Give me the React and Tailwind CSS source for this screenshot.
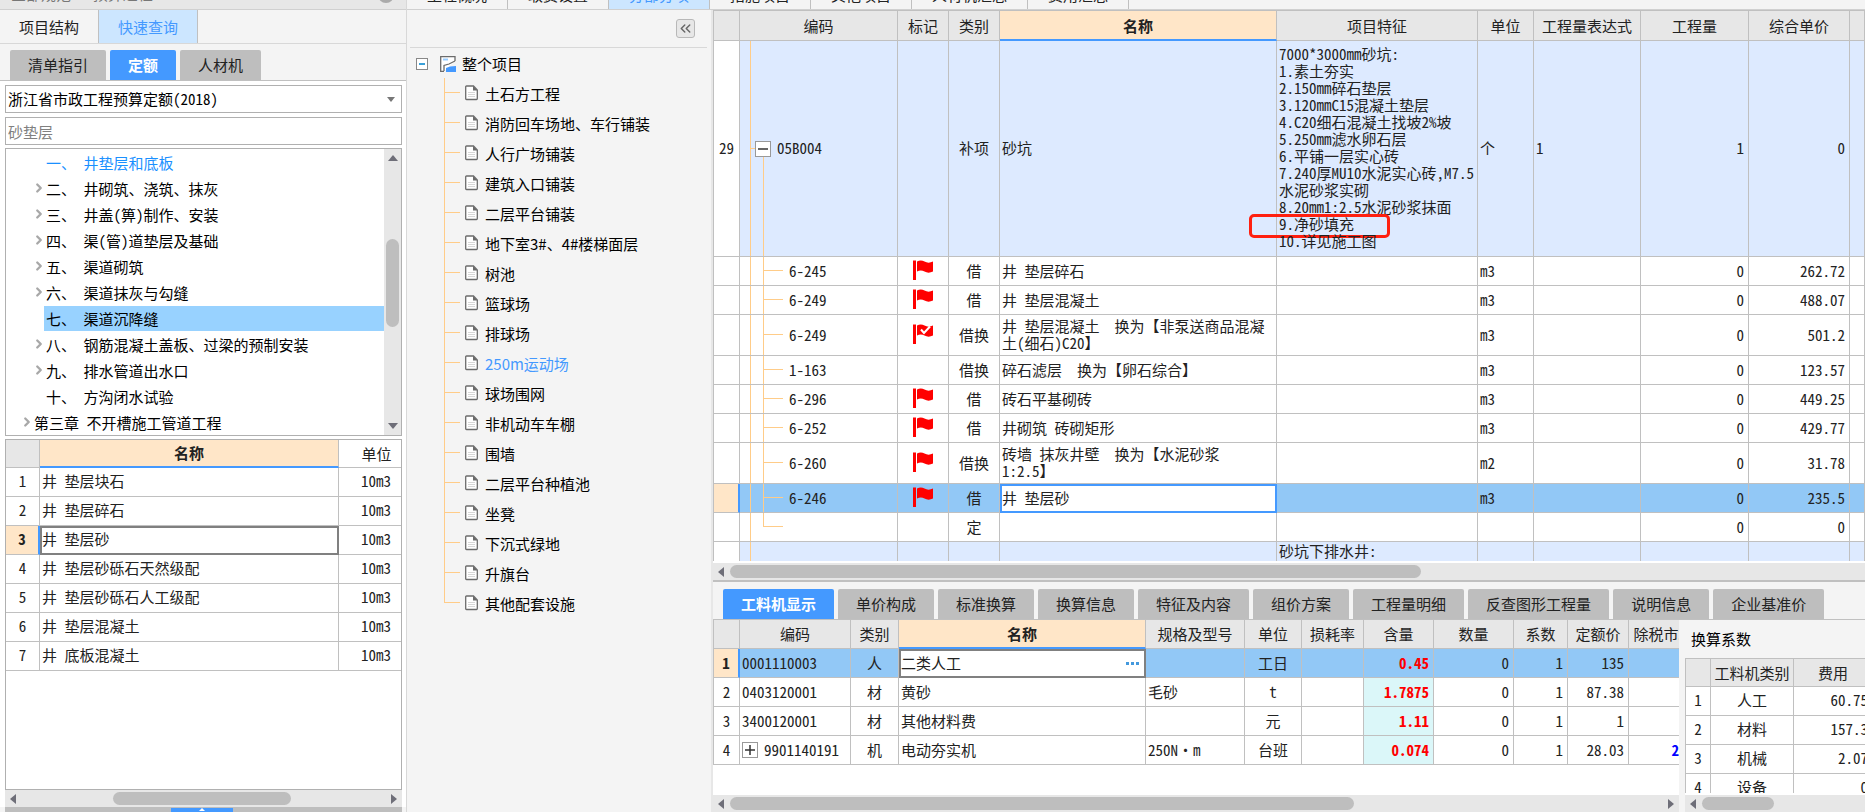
import { useState } from 'react';
import { ChevronRight, ChevronsLeft } from 'lucide-react';
import clsx from 'clsx';

const quotaTree = [
  { text: '一、 井垫层和底板', leaf: true, current: true },
  { text: '二、 井砌筑、浇筑、抹灰' },
  { text: '三、 井盖(箅)制作、安装' },
  { text: '四、 渠(管)道垫层及基础' },
  { text: '五、 渠道砌筑' },
  { text: '六、 渠道抹灰与勾缝' },
  { text: '七、 渠道沉降缝', leaf: true, selected: true },
  { text: '八、 钢筋混凝土盖板、过梁的预制安装' },
  { text: '九、 排水管道出水口' },
  { text: '十、 方沟闭水试验', leaf: true },
  { text: '第三章 不开槽施工管道工程', top: true },
];

const quotaItems = [
  '井 垫层块石',
  '井 垫层碎石',
  '井 垫层砂',
  '井 垫层砂砾石天然级配',
  '井 垫层砂砾石人工级配',
  '井 垫层混凝土',
  '井 底板混凝土',
];

const projectItems = [
  '土石方工程',
  '消防回车场地、车行铺装',
  '人行广场铺装',
  '建筑入口铺装',
  '二层平台铺装',
  '地下室3#、4#楼梯面层',
  '树池',
  '篮球场',
  '排球场',
  '250m运动场',
  '球场围网',
  '非机动车车棚',
  '围墙',
  '二层平台种植池',
  '坐凳',
  '下沉式绿地',
  '升旗台',
  '其他配套设施',
];

const mainTabs = ['工程概况', '取费设置', '分部分项', '措施项目', '其他项目', '人材机汇总', '费用汇总'];

const detailTabs = [
  '工料机显示',
  '单价构成',
  '标准换算',
  '换算信息',
  '特征及内容',
  '组价方案',
  '工程量明细',
  '反查图形工程量',
  '说明信息',
  '企业基准价',
];

const features = [
  '7000*3000mm砂坑:',
  '1.素土夯实',
  '2.150mm碎石垫层',
  '3.120mmC15混凝土垫层',
  '4.C20细石混凝土找坡2%坡',
  '5.250mm滤水卵石层',
  '6.平铺一层实心砖',
  '7.240厚MU10水泥实心砖,M7.5',
  '水泥砂浆实砌',
  '8.20mm1:2.5水泥砂浆抹面',
  '9.净砂填充',
  '10.详见施工图',
];

const billRows = [
  { code: '6-245', flag: 'plain', type: '借', name: '井 垫层碎石', unit: 'm3', price: '262.72' },
  { code: '6-249', flag: 'plain', type: '借', name: '井 垫层混凝土', unit: 'm3', price: '488.07' },
  { code: '6-249', flag: 'check', type: '借换', name: '井 垫层混凝土  换为【非泵送商品混凝\n土(细石)C20】', unit: 'm3', price: '501.2', tall: true },
  { code: '1-163', type: '借换', name: '碎石滤层  换为【卵石综合】', unit: 'm3', price: '123.57' },
  { code: '6-296', flag: 'plain', type: '借', name: '砖石平基砌砖', unit: 'm3', price: '449.25' },
  { code: '6-252', flag: 'plain', type: '借', name: '井砌筑 砖砌矩形', unit: 'm3', price: '429.77' },
  { code: '6-260', flag: 'plain', type: '借换', name: '砖墙 抹灰井壁  换为【水泥砂浆\n1:2.5】', unit: 'm2', price: '31.78', tall: true },
  { code: '6-246', flag: 'plain', type: '借', name: '井 垫层砂', unit: 'm3', price: '235.5', selected: true },
  { code: '', type: '定', name: '', unit: '', price: '0', last: true },
];

const resources = [
  { code: '0001110003', type: '人', name: '二类人工', spec: '', unit: '工日', amount: '0.45', price: '135', selected: true },
  { code: '0403120001', type: '材', name: '黄砂', spec: '毛砂', unit: 't', amount: '1.7875', price: '87.38' },
  { code: '3400120001', type: '材', name: '其他材料费', spec: '', unit: '元', amount: '1.11', price: '1' },
  { code: '9901140191', type: '机', name: '电动夯实机', spec: '250N·m', unit: '台班', amount: '0.074', price: '28.03', tax: '28.03', expand: true },
];

const factors = [
  ['人工', '60.75'],
  ['材料', '157.3'],
  ['机械', '2.07'],
  ['设备', '0'],
];

// Shared grid styles
const songFont = "font-['Noto_Sans_Mono_CJK_SC','Noto_Sans_CJK_SC',monospace]";
const cell = 'border-r border-b border-[#c0c0c0] whitespace-pre overflow-hidden p-0';
const billCell = clsx(cell, 'pb-[2px]');
const head = 'border-r border-b border-[#c0c0c0] bg-[#e7e7e7] font-normal whitespace-nowrap overflow-hidden p-0 text-center';
const headActive = 'border-r border-[#c0c0c0] border-b-2 border-b-[#4499ff] bg-[#ffe6c8] font-bold p-0 text-center';

const Triangle = ({ dir }) => {
  const points = {
    left: '8,0 8,10 2,5',
    right: '2,0 2,10 8,5',
    up: '0,8 10,8 5,2',
    down: '0,2 10,2 5,8',
  };
  return (
    <svg viewBox="0 0 10 10" className="size-[10px] shrink-0 fill-[#6e6e78]" aria-hidden="true">
      <polygon points={points[dir]} />
    </svg>
  );
};

const HScroll = ({ thumb, right = true }) => (
  <div className="flex h-[17px] shrink-0 items-center gap-1 bg-[#e7e7e7] px-[3px]">
    <Triangle dir="left" />
    <div className="flex-1">
      <div className={clsx('h-[13px] rounded-full bg-[#bebebe]', thumb)} />
    </div>
    {right && <Triangle dir="right" />}
  </div>
);

const Flag = ({ checked }) => (
  <svg viewBox="0 0 20 20" className="mx-auto size-5" aria-hidden="true">
    <path d="M0 0.500h3V20H0z" fill="#ff0000" />
    <path d="M4 1.500C6.500 0 9 0 11.500 1.500S17 3 20 1.500V11.500C17 13 14 13 11.500 11.500S6.500 10 4 11.500z" fill="#ff0000" />
    {checked && <path d="M8 5.500l3 3.500 6-6.500" fill="none" stroke="#fff" strokeWidth="2" />}
  </svg>
);

const DocIcon = () => (
  <svg viewBox="0 0 13 16" className="h-4 w-[13px] shrink-0" aria-hidden="true">
    <path d="M8.500 1H1.500a.8.8 0 0 0-.8.8V13.700a.8.8 0 0 0 .8.8H11.500a.8.8 0 0 0 .8-.8V5z" fill="#fff" stroke="#6b6b6b" strokeWidth="1.300" />
    <path d="M8 1v4.500h4.500z" fill="#6b6b6b" />
    <path d="M3 7.500h7M3 9.500h7M3 11.500h7" stroke="#d8d8d8" />
  </svg>
);

const ProjectIcon = () => (
  <svg viewBox="0 0 16 16" className="size-4 shrink-0" aria-hidden="true">
    <path d="M15 5V.700H.700V15.300H4" fill="#fff" stroke="#6b6b6b" strokeWidth="1.300" />
    <path d="M3 3.500h5" stroke="#99ccff" strokeWidth="2" />
    <path d="M4 15V9.500L9 8l6-3" fill="none" stroke="#6b6b6b" strokeWidth="1.300" />
    <path d="M6 16v-4l4-1.500 6-.5v6z" fill="#4499ff" />
  </svg>
);

const ExpandBox = ({ open }) => (
  <button className="flex size-4 shrink-0 items-center justify-center border border-[#999] bg-white" aria-label={open ? '收起' : '展开'}>
    <svg viewBox="0 0 10 10" className="size-[10px]">
      <path d={open ? 'M0 5h10' : 'M0 5h10M5 0v10'} stroke="#333" strokeWidth="1.500" />
    </svg>
  </button>
);

const GrayTabs = ({ items, active, onSelect }) => (
  <div className="flex gap-1">
    {items.map((t) => (
      <button
        key={t}
        onClick={() => onSelect(t)}
        className={clsx(
          'h-[30px] shrink-0 rounded-t-[2px] px-[18px] whitespace-nowrap',
          t === active ? 'bg-[#4499ff] font-bold text-white' : 'bg-[#bebebe] text-[#222]'
        )}
      >
        {t}
      </button>
    ))}
  </div>
);

const QuotaPanel = () => {
  const [tab, setTab] = useState('定额');

  return (
    <aside className="flex w-[407px] shrink-0 flex-col border-r border-[#d8d8d8] bg-[#f4f4f4]">
      <div className="flex h-[10px] shrink-0 items-end justify-between overflow-hidden border-b border-[#d0d0d0] bg-[#e7e7e7] pr-3 pl-[11px]">
        <span className="h-7 leading-[26px] text-[#777]">全部规范 一 预算过程</span>
        <span className="mb-[6px] size-4 shrink-0 rounded-full bg-[#aaa]" />
      </div>

      <div className="flex h-[34px] shrink-0 border-b border-[#d8d8d8]">
        <button className="border-r border-[#c0c0c0] px-[19px]">项目结构</button>
        <button className="border-r border-[#c0c0c0] bg-[#cce6ff] px-[19px] text-[#4499ff]">快速查询</button>
      </div>

      <div className="shrink-0 border-b border-[#c0c0c0] pt-[6px] pl-[10px]">
        <GrayTabs items={['清单指引', '定额', '人材机']} active={tab} onSelect={setTab} />
      </div>

      <div className={clsx('flex min-h-0 flex-1 flex-col bg-white pt-1 pr-1 pl-[5px]', songFont)}>
        <div className="flex h-7 shrink-0 items-center border border-[#b0b0b0] pr-[6px]">
          <select aria-label="定额库" className="h-full flex-1 appearance-none bg-white pl-[2px] text-black">
            <option>浙江省市政工程预算定额(2018)</option>
          </select>
          <svg viewBox="0 0 8 8" className="size-2 fill-[#777]" aria-hidden="true">
            <polygon points="0,2 8,2 4,7" />
          </svg>
        </div>
        <input
          type="text"
          aria-label="查询内容"
          placeholder="砂垫层"
          className="mt-1 h-7 shrink-0 border border-[#b0b0b0] pl-[2px] placeholder:text-[#808080]"
        />

        {/* Chapter tree */}
        <div className="mt-[3px] flex h-[288px] shrink-0 border border-[#b0b0b0]">
          <ul className="min-w-0 flex-1 overflow-hidden text-black">
            {quotaTree.map((n) => (
              <li key={n.text} className={clsx('flex h-[26px] items-center whitespace-pre', n.top ? 'pl-[14px]' : 'pl-[26px]')}>
                <span className="w-[12px] shrink-0">
                  {!n.leaf && <ChevronRight size={14} strokeWidth={4} className="text-[#a8a8a8]" />}
                </span>
                <span
                  className={clsx(
                    'flex-1 pl-[2px] leading-[25px]',
                    n.current && 'text-[#1a90ff]',
                    n.selected && 'bg-[#98d2ff]'
                  )}
                >
                  {n.text}
                </span>
              </li>
            ))}
          </ul>
          <div className="flex w-[17px] flex-col items-center bg-[#e7e7e7] py-1">
            <Triangle dir="up" />
            <div className="mt-[76px] h-[88px] w-[13px] rounded-full bg-[#bebebe]" />
            <div className="mt-auto">
              <Triangle dir="down" />
            </div>
          </div>
        </div>

        {/* Quota items of the chapter */}
        <div className="mt-[3px] min-h-0 flex-1 overflow-hidden border border-[#b0b0b0]">
          <table className="w-[408px] table-fixed border-separate border-spacing-0 text-[#222]">
            <colgroup>
              <col className="w-[34px]" />
              <col className="w-[299px]" />
              <col className="w-[75px]" />
            </colgroup>
            <thead>
              <tr className="h-7">
                <th className={head}></th>
                <th className={headActive}>名称</th>
                <th className="border-b border-[#c0c0c0] p-0 font-normal">单位</th>
              </tr>
            </thead>
            <tbody>
              {quotaItems.map((name, i) => (
                <tr key={name} className="h-[29px]">
                  <td className={clsx(billCell, 'text-center', i === 2 && 'border-r-2 border-r-[#4499ff] bg-[#ffe6c8] font-bold')}>{i + 1}</td>
                  <td className={clsx(billCell, 'pl-[2px]', i === 2 && 'outline-2 -outline-offset-2 outline-[#808080]')}>{name}</td>
                  <td className={clsx(billCell, 'text-center')}>10m3</td>
                </tr>
              ))}
            </tbody>
          </table>
        </div>
        <HScroll thumb="ml-[25%] w-[49%]" />
      </div>
      <div className="mr-1 ml-[5px] flex h-[5px] shrink-0 justify-center bg-[#bebebe] pr-1">
        <div className="mt-px flex w-[62px] justify-center bg-[#4499ff]">
          <svg viewBox="0 0 6 4" className="h-1 w-[6px] fill-white" aria-hidden="true">
            <polygon points="0,3 3,0 6,3" />
          </svg>
        </div>
      </div>
    </aside>
  );
};

const ProjectTree = () => (
  <nav className="flex w-[306px] shrink-0 flex-col border-r-2 border-[#e7e7e7] bg-[#f4f4f4] text-black">
    <div className="mr-1 ml-[3px] flex h-[38px] shrink-0 items-center justify-end border-b border-[#d8d8d8] pr-[12px]">
      <button aria-label="收起" className="flex size-[19px] items-center justify-center rounded-[3px] border border-[#b8b8b8] bg-[#e7e7e7]">
        <ChevronsLeft size={17} className="text-[#666]" />
      </button>
    </div>
    <div className="flex h-[30px] items-center pt-px pl-[9px]">
      <button aria-label="收起整个项目" className="mr-[12px] flex size-[12px] items-center justify-center border border-[#888] bg-white">
        <span className="w-[6px] border-t-2 border-[#3aa0d8]" />
      </button>
      <ProjectIcon />
      <span className="pl-[6px]">整个项目</span>
    </div>
    <ul className="pl-[37px]">
      {projectItems.map((name, i) => (
        <li key={name} className="flex h-[30px] items-center">
          <span className="flex h-full w-4 flex-col">
            <span className="h-[15px] border-b border-l border-[#ffcc88]" />
            {i < projectItems.length - 1 && <span className="flex-1 border-l border-[#ffcc88]" />}
          </span>
          <a href="#" className={clsx('flex items-center gap-[7px] pl-[5px]', name === '250m运动场' && 'text-[#4499ff]')}>
            <DocIcon />
            <span className="pt-[2px]">{name}</span>
          </a>
        </li>
      ))}
    </ul>
  </nav>
);

const BillTable = () => (
  <div className="min-h-0 flex-1 overflow-hidden border-b-2 border-white bg-white">
    <table className={clsx('w-full table-fixed border-separate border-spacing-0 border-t border-l border-[#c0c0c0] leading-[17px] text-[#222]', songFont)}>
      <colgroup>
        <col className="w-[26px]" />
        <col className="w-[158px]" />
        <col className="w-[51px]" />
        <col className="w-[51px]" />
        <col className="w-[277px]" />
        <col className="w-[201px]" />
        <col className="w-[56px]" />
        <col className="w-[107px]" />
        <col className="w-[108px]" />
        <col className="w-[101px]" />
        <col />
      </colgroup>
      <thead>
        <tr className="h-[30px]">
          <th className={head}></th>
          <th className={head}>编码</th>
          <th className={head}>标记</th>
          <th className={head}>类别</th>
          <th className={headActive}>名称</th>
          <th className={head}>项目特征</th>
          <th className={head}>单位</th>
          <th className={head}>工程量表达式</th>
          <th className={head}>工程量</th>
          <th className={head}>综合单价</th>
          <th className={head}></th>
        </tr>
      </thead>
      <tbody>
        <tr className="bg-[#ddeaff]">
          <td className={clsx(billCell, 'bg-white text-center')}>29</td>
          <td className={clsx(cell, 'h-[216px]')}>
            <div className="flex h-full items-center pl-[10px]">
              <span className="flex h-full w-[5px] items-center border-l border-[#ffcc88]">
                <span className="w-full border-t border-[#ffcc88]" />
              </span>
              <div className="flex h-full w-4 flex-col">
                <span className="flex-1" />
                <ExpandBox open />
                <span className="ml-2 flex-1 border-l border-[#ffcc88]" />
              </div>
              <span className="pb-[2px] pl-[6px]">05B004</span>
            </div>
          </td>
          <td className={cell}></td>
          <td className={clsx(billCell, 'text-center')}>补项</td>
          <td className={clsx(billCell, 'pl-[2px]')}>砂坑</td>
          <td className="border-r border-b border-[#c0c0c0] p-0 pb-1 pl-[2px] whitespace-nowrap">
            {features.map((f) => (
              <div key={f} className="relative">
                {f}
                {f.startsWith('9.') && (
                  <span className="absolute -top-px -left-[30px] h-6 w-[141px] rounded-[5px] border-3 border-[#ff2010]" />
                )}
              </div>
            ))}
          </td>
          <td className={clsx(billCell, 'pl-[2px]')}>个</td>
          <td className={clsx(billCell, 'pl-[2px]')}>1</td>
          <td className={clsx(billCell, 'pr-1 text-right')}>1</td>
          <td className={clsx(billCell, 'pr-1 text-right')}>0</td>
          <td className={cell}></td>
        </tr>
        {billRows.map((r, i) => (
          <tr key={i} className={r.selected ? 'bg-[#92c8f6]' : 'bg-white'}>
            <td className={clsx(cell, r.selected && 'border-r-2 border-r-[#4499ff] bg-[#ffe6c8]')}></td>
            <td className={clsx(cell, r.tall ? 'h-[41px]' : 'h-[29px]')}>
              <div className="flex h-full items-center pl-[10px]">
                <span className="h-full w-[13px] border-l border-[#ffcc88]" />
                <span className="flex h-full w-5 flex-col">
                  <span className="h-1/2 border-b border-l border-[#ffcc88]" />
                  {!r.last && <span className="flex-1 border-l border-[#ffcc88]" />}
                </span>
                <span className="pb-[2px] pl-[6px]">{r.code}</span>
              </div>
            </td>
            <td className={billCell}>{r.flag && <Flag checked={r.flag === 'check'} />}</td>
            <td className={clsx(billCell, 'text-center')}>{r.type}</td>
            <td className={clsx(billCell, 'pl-[2px]', r.selected && 'bg-white outline-2 -outline-offset-2 outline-[#4499ff]')}>{r.name}</td>
            <td className={cell}></td>
            <td className={clsx(billCell, 'pl-[2px]')}>{r.unit}</td>
            <td className={cell}></td>
            <td className={clsx(billCell, 'pr-1 text-right')}>0</td>
            <td className={clsx(billCell, 'pr-1 text-right')}>{r.price}</td>
            <td className={cell}></td>
          </tr>
        ))}
        <tr className="bg-[#ddeaff] align-top">
          <td className={clsx(cell, 'bg-white')}></td>
          <td className={clsx(cell, 'h-[60px]')}>
            <div className="ml-[10px] h-full border-l border-[#ffcc88]" />
          </td>
          <td className={cell}></td>
          <td className={cell}></td>
          <td className={cell}></td>
          <td className={clsx(cell, 'pl-[2px]')}>砂坑下排水井:</td>
          <td className={cell}></td>
          <td className={cell}></td>
          <td className={cell}></td>
          <td className={cell}></td>
          <td className={cell}></td>
        </tr>
      </tbody>
    </table>
  </div>
);

const ResourceTable = () => (
  <div className="flex min-w-0 flex-1 flex-col bg-white">
    <div className="min-h-0 flex-1 overflow-hidden">
      <table className={clsx('w-[1001px] table-fixed border-separate border-spacing-0 border-l border-[#c0c0c0] text-[#222]', songFont)}>
        <colgroup>
          <col className="w-[26px]" />
          <col className="w-[111px]" />
          <col className="w-[48px]" />
          <col className="w-[247px]" />
          <col className="w-[99px]" />
          <col className="w-[57px]" />
          <col className="w-[62px]" />
          <col className="w-[70px]" />
          <col className="w-[80px]" />
          <col className="w-[54px]" />
          <col className="w-[61px]" />
          <col className="w-[85px]" />
        </colgroup>
        <thead>
          <tr className="h-[29px]">
            <th className={head}></th>
            <th className={head}>编码</th>
            <th className={head}>类别</th>
            <th className={headActive}>名称</th>
            <th className={head}>规格及型号</th>
            <th className={head}>单位</th>
            <th className={head}>损耗率</th>
            <th className={head}>含量</th>
            <th className={head}>数量</th>
            <th className={head}>系数</th>
            <th className={head}>定额价</th>
            <th className={head}>除税市场价</th>
          </tr>
        </thead>
        <tbody>
          {resources.map((r, i) => (
            <tr key={r.code} className={clsx('h-[29px]', r.selected && 'bg-[#92c8f6]')}>
              <td className={clsx(cell, 'text-center', r.selected && 'border-r-2 border-r-[#4499ff] bg-[#ffe6c8] font-bold')}>{i + 1}</td>
              <td className={clsx(cell, 'pl-[2px]')}>
                <div className="flex items-center gap-[6px]">
                  {r.expand && <ExpandBox />}
                  {r.code}
                </div>
              </td>
              <td className={clsx(cell, 'text-center')}>{r.type}</td>
              <td className={clsx(cell, 'pl-[2px]', r.selected && 'bg-white outline-2 -outline-offset-2 outline-[#808080]')}>
                <div className="flex items-center justify-between pr-[6px]">
                  {r.name}
                  {r.selected && (
                    <button aria-label="更多" className="flex gap-[2px]">
                      <span className="size-[3px] bg-[#4499dd]" />
                      <span className="size-[3px] bg-[#4499dd]" />
                      <span className="size-[3px] bg-[#4499dd]" />
                    </button>
                  )}
                </div>
              </td>
              <td className={clsx(cell, 'pl-[2px]')}>{r.spec}</td>
              <td className={clsx(cell, 'text-center')}>{r.unit}</td>
              <td className={cell}></td>
              <td className={clsx(cell, 'pr-1 text-right font-bold text-[#ff0000]', !r.selected && 'bg-[#dbf7f9]')}>{r.amount}</td>
              <td className={clsx(cell, 'pr-1 text-right')}>0</td>
              <td className={clsx(cell, 'pr-1 text-right')}>1</td>
              <td className={clsx(cell, 'pr-1 text-right')}>{r.price}</td>
              <td className={clsx(cell, 'pr-1 text-right font-bold text-[#0000ff]')}>{r.tax}</td>
            </tr>
          ))}
        </tbody>
      </table>
    </div>
    <HScroll thumb="w-[67%]" />
  </div>
);

const FactorPanel = () => (
  <div className="flex w-[180px] shrink-0 flex-col overflow-hidden bg-white">
    <h2 className="h-[38px] shrink-0 bg-[#f4f4f4] pl-[6px] leading-[38px] text-black">换算系数</h2>
    <div className="min-h-0 flex-1 overflow-hidden border-b-2 border-white">
      <table className={clsx('w-[188px] table-fixed border-separate border-spacing-0 border-t border-l border-[#c0c0c0] text-[#222]', songFont)}>
        <colgroup>
          <col className="w-[25px]" />
          <col className="w-[83px]" />
          <col className="w-[79px]" />
        </colgroup>
        <thead>
          <tr className="h-7">
            <th className={head}></th>
            <th className={head}>工料机类别</th>
            <th className={head}>费用</th>
          </tr>
        </thead>
        <tbody>
          {factors.map(([type, fee], i) => (
            <tr key={type} className="h-[29px]">
              <td className={clsx(billCell, 'text-center')}>{i + 1}</td>
              <td className={clsx(billCell, 'text-center')}>{type}</td>
              <td className={clsx(billCell, 'pr-1 text-right')}>{fee}</td>
            </tr>
          ))}
        </tbody>
      </table>
    </div>
    <HScroll thumb="w-[72px]" right={false} />
  </div>
);

const App = () => {
  const [detailTab, setDetailTab] = useState('工料机显示');

  return (
    <div className="flex h-screen overflow-hidden bg-[#f4f4f4] font-['Noto_Sans_CJK_SC',sans-serif] text-[15px] leading-5 text-[#222]">
      <QuotaPanel />
      <div className="flex min-w-0 flex-1 flex-col">
        <div className="flex h-[10px] shrink-0 items-end overflow-hidden border-b border-[#d0d0d0]">
          {mainTabs.map((t) => (
            <button
              key={t}
              className={clsx(
                'h-7 shrink-0 border-r border-[#c0c0c0] px-5 leading-7',
                t === '分部分项' && 'bg-[#cce6ff] text-[#4499ff]'
              )}
            >
              {t}
            </button>
          ))}
        </div>

        <div className="flex min-h-0 flex-1">
          <ProjectTree />
          <main className="flex min-w-0 flex-1 flex-col">
            <BillTable />
            <HScroll thumb="w-[61%]" right={false} />
            <section className="flex h-[232px] shrink-0 flex-col border-t-2 border-[#c0c0c0]">
              <div className="border-b border-[#c0c0c0] pt-[7px] pl-[10px]">
                <GrayTabs items={detailTabs} active={detailTab} onSelect={setDetailTab} />
              </div>
              <div className="flex min-h-0 flex-1 gap-[6px]">
                <ResourceTable />
                <FactorPanel />
              </div>
            </section>
          </main>
        </div>
      </div>
    </div>
  );
};

export default App;
